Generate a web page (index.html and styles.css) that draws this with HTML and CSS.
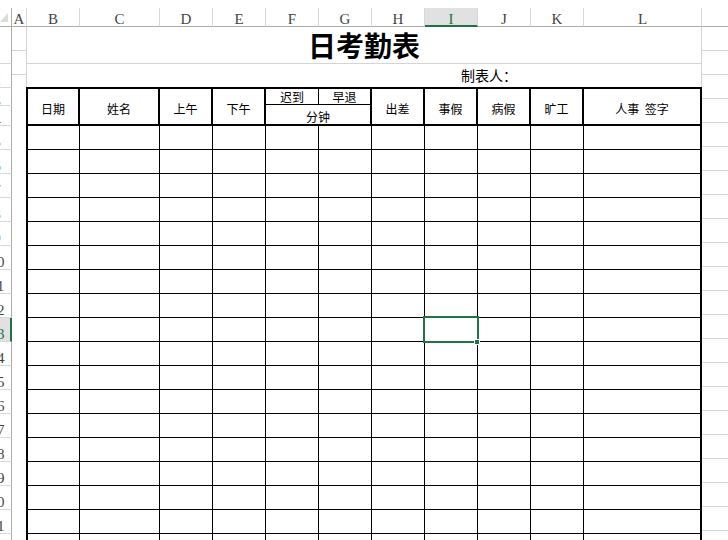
FILE: index.html
```html
<!DOCTYPE html>
<html lang="zh-CN">
<head>
<meta charset="utf-8">
<title>日考勤表</title>
<link rel="stylesheet" href="styles.css">
</head>
<body>
<div class="sheet">
  <div class="colheads">
    <div class="corner"><svg width="11" height="18" viewBox="0 0 11 18"><polygon points="0,14 8,14 8,5" fill="#dcdcdc"/></svg></div>
    <div class="ch ch-a">A</div>
    <div class="ch">B</div>
    <div class="ch ch-c">C</div>
    <div class="ch">D</div>
    <div class="ch">E</div>
    <div class="ch">F</div>
    <div class="ch">G</div>
    <div class="ch">H</div>
    <div class="ch sel">I</div>
    <div class="ch">J</div>
    <div class="ch">K</div>
    <div class="ch ch-l">L</div>
    <div class="ch ch-m"></div>
  </div>
  <div class="body">
    <div class="rowheads">
      <div class="rh h37"><span>1</span></div>
      <div class="rh"><span>2</span></div>
      <div class="rh h18"><span>3</span></div>
      <div class="rh h20"><span>4</span></div>
      <div class="rh"><span>5</span></div>
      <div class="rh"><span>6</span></div>
      <div class="rh"><span>7</span></div>
      <div class="rh"><span>8</span></div>
      <div class="rh"><span>9</span></div>
      <div class="rh"><span>10</span></div>
      <div class="rh"><span>11</span></div>
      <div class="rh"><span>12</span></div>
      <div class="rh sel"><span>13</span></div>
      <div class="rh"><span>14</span></div>
      <div class="rh"><span>15</span></div>
      <div class="rh"><span>16</span></div>
      <div class="rh"><span>17</span></div>
      <div class="rh"><span>18</span></div>
      <div class="rh"><span>19</span></div>
      <div class="rh"><span>20</span></div>
      <div class="rh"><span>21</span></div>
      <div class="rh"><span>22</span></div>
    </div>
    <div class="col-a">
      <div class="ga h37"></div>
      <div class="ga"></div>
    </div>
    <div class="main">
      <div class="title">日考勤表</div>
      <div class="maker">制表人：</div>
      <div class="att">
        <div class="thead">
          <div class="th c-b">日期</div>
          <div class="th c-c">姓名</div>
          <div class="th c-n">上午</div>
          <div class="th c-n">下午</div>
          <div class="th c-fg">
            <div class="fg-top"><div class="fg-f">迟到</div><div class="fg-g">早退</div></div>
            <div class="fg-bot">分钟</div>
          </div>
          <div class="th c-n">出差</div>
          <div class="th c-n">事假</div>
          <div class="th c-n">病假</div>
          <div class="th c-n">旷工</div>
          <div class="th c-l last">人事 签字</div>
        </div>
        <div class="tr"><div class="td c-b"></div><div class="td c-c"></div><div class="td c-n"></div><div class="td c-n"></div><div class="td c-n"></div><div class="td c-n"></div><div class="td c-n"></div><div class="td c-n"></div><div class="td c-n"></div><div class="td c-n"></div><div class="td c-l last"></div></div>
        <div class="tr"><div class="td c-b"></div><div class="td c-c"></div><div class="td c-n"></div><div class="td c-n"></div><div class="td c-n"></div><div class="td c-n"></div><div class="td c-n"></div><div class="td c-n"></div><div class="td c-n"></div><div class="td c-n"></div><div class="td c-l last"></div></div>
        <div class="tr"><div class="td c-b"></div><div class="td c-c"></div><div class="td c-n"></div><div class="td c-n"></div><div class="td c-n"></div><div class="td c-n"></div><div class="td c-n"></div><div class="td c-n"></div><div class="td c-n"></div><div class="td c-n"></div><div class="td c-l last"></div></div>
        <div class="tr"><div class="td c-b"></div><div class="td c-c"></div><div class="td c-n"></div><div class="td c-n"></div><div class="td c-n"></div><div class="td c-n"></div><div class="td c-n"></div><div class="td c-n"></div><div class="td c-n"></div><div class="td c-n"></div><div class="td c-l last"></div></div>
        <div class="tr"><div class="td c-b"></div><div class="td c-c"></div><div class="td c-n"></div><div class="td c-n"></div><div class="td c-n"></div><div class="td c-n"></div><div class="td c-n"></div><div class="td c-n"></div><div class="td c-n"></div><div class="td c-n"></div><div class="td c-l last"></div></div>
        <div class="tr"><div class="td c-b"></div><div class="td c-c"></div><div class="td c-n"></div><div class="td c-n"></div><div class="td c-n"></div><div class="td c-n"></div><div class="td c-n"></div><div class="td c-n"></div><div class="td c-n"></div><div class="td c-n"></div><div class="td c-l last"></div></div>
        <div class="tr"><div class="td c-b"></div><div class="td c-c"></div><div class="td c-n"></div><div class="td c-n"></div><div class="td c-n"></div><div class="td c-n"></div><div class="td c-n"></div><div class="td c-n"></div><div class="td c-n"></div><div class="td c-n"></div><div class="td c-l last"></div></div>
        <div class="tr"><div class="td c-b"></div><div class="td c-c"></div><div class="td c-n"></div><div class="td c-n"></div><div class="td c-n"></div><div class="td c-n"></div><div class="td c-n"></div><div class="td c-n"></div><div class="td c-n"></div><div class="td c-n"></div><div class="td c-l last"></div></div>
        <div class="tr"><div class="td c-b"></div><div class="td c-c"></div><div class="td c-n"></div><div class="td c-n"></div><div class="td c-n"></div><div class="td c-n"></div><div class="td c-n"></div><div class="td c-n sel"><div class="selbox"><div class="handle"></div></div></div><div class="td c-n"></div><div class="td c-n"></div><div class="td c-l last"></div></div>
        <div class="tr"><div class="td c-b"></div><div class="td c-c"></div><div class="td c-n"></div><div class="td c-n"></div><div class="td c-n"></div><div class="td c-n"></div><div class="td c-n"></div><div class="td c-n"></div><div class="td c-n"></div><div class="td c-n"></div><div class="td c-l last"></div></div>
        <div class="tr"><div class="td c-b"></div><div class="td c-c"></div><div class="td c-n"></div><div class="td c-n"></div><div class="td c-n"></div><div class="td c-n"></div><div class="td c-n"></div><div class="td c-n"></div><div class="td c-n"></div><div class="td c-n"></div><div class="td c-l last"></div></div>
        <div class="tr"><div class="td c-b"></div><div class="td c-c"></div><div class="td c-n"></div><div class="td c-n"></div><div class="td c-n"></div><div class="td c-n"></div><div class="td c-n"></div><div class="td c-n"></div><div class="td c-n"></div><div class="td c-n"></div><div class="td c-l last"></div></div>
        <div class="tr"><div class="td c-b"></div><div class="td c-c"></div><div class="td c-n"></div><div class="td c-n"></div><div class="td c-n"></div><div class="td c-n"></div><div class="td c-n"></div><div class="td c-n"></div><div class="td c-n"></div><div class="td c-n"></div><div class="td c-l last"></div></div>
        <div class="tr"><div class="td c-b"></div><div class="td c-c"></div><div class="td c-n"></div><div class="td c-n"></div><div class="td c-n"></div><div class="td c-n"></div><div class="td c-n"></div><div class="td c-n"></div><div class="td c-n"></div><div class="td c-n"></div><div class="td c-l last"></div></div>
        <div class="tr"><div class="td c-b"></div><div class="td c-c"></div><div class="td c-n"></div><div class="td c-n"></div><div class="td c-n"></div><div class="td c-n"></div><div class="td c-n"></div><div class="td c-n"></div><div class="td c-n"></div><div class="td c-n"></div><div class="td c-l last"></div></div>
        <div class="tr"><div class="td c-b"></div><div class="td c-c"></div><div class="td c-n"></div><div class="td c-n"></div><div class="td c-n"></div><div class="td c-n"></div><div class="td c-n"></div><div class="td c-n"></div><div class="td c-n"></div><div class="td c-n"></div><div class="td c-l last"></div></div>
        <div class="tr"><div class="td c-b"></div><div class="td c-c"></div><div class="td c-n"></div><div class="td c-n"></div><div class="td c-n"></div><div class="td c-n"></div><div class="td c-n"></div><div class="td c-n"></div><div class="td c-n"></div><div class="td c-n"></div><div class="td c-l last"></div></div>
        <div class="tr"><div class="td c-b"></div><div class="td c-c"></div><div class="td c-n"></div><div class="td c-n"></div><div class="td c-n"></div><div class="td c-n"></div><div class="td c-n"></div><div class="td c-n"></div><div class="td c-n"></div><div class="td c-n"></div><div class="td c-l last"></div></div>
      </div>
    </div>
    <div class="col-m">
      <div class="gm h37"></div>
      <div class="gm"></div>
      <div class="gm h18"></div>
      <div class="gm h20"></div>
      <div class="gm"></div><div class="gm"></div><div class="gm"></div><div class="gm"></div><div class="gm"></div><div class="gm"></div>
      <div class="gm"></div><div class="gm"></div><div class="gm"></div><div class="gm"></div><div class="gm"></div><div class="gm"></div>
      <div class="gm"></div><div class="gm"></div><div class="gm"></div><div class="gm"></div><div class="gm"></div><div class="gm"></div>
    </div>
  </div>
</div>
</body>
</html>
```
FILE: styles.css
```css
* { box-sizing: border-box; margin: 0; padding: 0; }
html, body { width: 728px; height: 540px; overflow: hidden; background: #fff; }
body { font-family: "Noto Sans CJK SC", "Noto Sans", sans-serif; color: #000; }

.sheet { padding-top: 8px; }

/* column headers */
.colheads { display: flex; height: 19px; }
.corner { flex: none; width: 12px; border-right: 1px solid #ababab; border-bottom: 1px solid #ababab; overflow: hidden; }
.corner svg { display: block; }
.ch { flex: none; width: 53px; border-right: 1px solid #d8d8d8; border-bottom: 1px solid #ababab;
  text-align: center; font-family: "Liberation Serif", serif; font-size: 15px; line-height: 16px;
  padding-top: 3px; color: #444; overflow: hidden; }
.ch-a { width: 15px; }
.ch-c { width: 80px; }
.ch-l { width: 118px; }
.ch-m { flex: 1; border-right: none; }
.ch.sel { background: #e1e1e1; color: #217346; border-bottom: 2px solid #217346; }

/* body */
.body { display: flex; }

.rowheads { flex: none; width: 12px; }
.rh { height: 24px; border-right: 1px solid #ababab; border-bottom: 1px solid #d8d8d8;
  display: flex; align-items: center; overflow: hidden; }
.rh span { flex: none; width: 28px; margin-left: -17px; text-align: center;
  font-family: "Liberation Serif", serif; font-size: 15px; line-height: 16px; padding-top: 8px; color: #444; }
.rh.sel { background: #e1e1e1; border-right: 2px solid #217346; }
.rh.sel span { color: #217346; }

.h37 { height: 37px; }
.h18 { height: 18px; }
.h20 { height: 20px; }

.col-a { flex: none; width: 14px; }
.ga { height: 24px; border-bottom: 1px solid #d4d4d4; }

.col-m { flex: 1; }
.gm { height: 24px; border-bottom: 1px solid #d4d4d4; }

.main { flex: none; width: 676px; }
.title { height: 37px; border: 1px solid #d4d4d4; border-top: none; text-align: center;
  font-size: 28px; font-weight: 700; line-height: 36px; }
.maker { height: 23px; border-left: 1px solid #d4d4d4; border-right: 1px solid #d4d4d4;
  font-size: 14px; line-height: 22px; padding-left: 434px; }

/* attendance table */
.att { border: 2px solid #000; border-bottom: none; }
.thead { display: flex; height: 37px; border-bottom: 2px solid #000; }
.th { flex: none; border-right: 2px solid #000; display: flex; align-items: center; justify-content: center;
  font-size: 12px; padding-top: 3px; }
.th.last { border-right: none; word-spacing: 3px; }
.c-b { width: 52px; }
.c-c { width: 80px; }
.c-n { width: 53px; }
.c-fg { width: 106px; }
.c-l { width: 116px; }

.th.c-fg { flex-direction: column; align-items: stretch; padding-top: 0; }
.fg-top { display: flex; height: 17px; border-bottom: 1px solid #000; }
.fg-f { width: 53px; border-right: 1px solid #000; display: flex; align-items: center; justify-content: center; padding-top: 1px; }
.fg-g { flex: 1; display: flex; align-items: center; justify-content: center; padding-top: 1px; }
.fg-bot { flex: 1; display: flex; align-items: center; justify-content: center; padding-top: 3px; }

.tr { display: flex; height: 24px; border-bottom: 1px solid #000; }
.td { flex: none; border-right: 1px solid #000; }
.td.last { border-right: none; }

.td.sel { position: relative; }
.selbox { position: absolute; left: -2px; top: -2px; width: 56px; height: 27px; border: 2px solid #217346; }
.handle { position: absolute; right: -3px; bottom: -4px; width: 6px; height: 6px; background: #217346; border: 1px solid #fff; }
```
